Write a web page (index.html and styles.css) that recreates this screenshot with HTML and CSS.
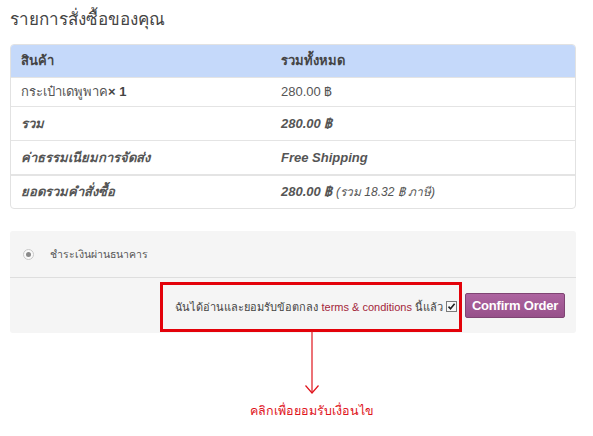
FILE: index.html
```html
<!DOCTYPE html>
<html lang="th">
<head>
<meta charset="utf-8">
<link rel="stylesheet" href="styles.css">
</head>
<body>
<div class="page">
  <h3 class="title">รายการสั่งซื้อของคุณ</h3>
  <table class="order">
    <thead>
      <tr><th class="c1">สินค้า</th><th>รวมทั้งหมด</th></tr>
    </thead>
    <tbody>
      <tr><td>กระเป๋าเดพูพาค<b class="qty">× 1</b></td><td>280.00 ฿</td></tr>
      <tr class="it"><td>รวม</td><td><b>280.00 ฿</b></td></tr>
      <tr class="it"><td>ค่าธรรมเนียมการจัดส่ง</td><td>Free Shipping</td></tr>
      <tr class="it total"><td>ยอดรวมคำสั่งซื้อ</td><td><b>280.00 ฿</b> <span class="tax">(รวม 18.32 ฿ ภาษี)</span></td></tr>
    </tbody>
  </table>

  <div class="payment">
    <div class="method">
      <span class="radio"><span class="dot"></span></span>
      <span class="method-label">ชำระเงินผ่านธนาคาร</span>
    </div>
    <div class="place">
      <div class="terms-box">
        <span class="terms">ฉันได้อ่านและยอมรับข้อตกลง <span class="link">terms &amp; conditions</span> นี้แล้ว</span>
        <span class="check">
          <svg width="11" height="11" viewBox="0 0 11 11"><rect x="0.5" y="0.5" width="10" height="10" fill="#f8f8f8" stroke="#7a7a7a"/><path d="M2.5 5.6 L4.5 7.8 L8.6 2.8" fill="none" stroke="#222" stroke-width="1.6"/></svg>
        </span>
      </div>
      <button class="confirm">Confirm Order</button>
    </div>
  </div>

  <div class="note">
    <svg class="arrow" width="16" height="64" viewBox="0 0 16 64"><path d="M8 0 V62" stroke="#e0141c" stroke-width="1.2" fill="none"/><path d="M1.5 54.5 L8 62 L14.5 54.5" stroke="#e0141c" stroke-width="1.2" fill="none"/></svg>
    <div class="caption">คลิกเพื่อยอมรับเงื่อนไข</div>
  </div>
</div>
</body>
</html>
```

FILE: styles.css
```css
html, body {
  margin: 0;
  padding: 0;
  background: #fff;
}
body {
  font-family: "Liberation Sans", Arial, sans-serif;
  font-size: 13px;
  color: #555;
}
.page {
  width: 566px;
  margin-left: 10px;
  padding-top: 8px;
}
.title {
  margin: 0 0 12px 0;
  font-size: 17px;
  font-weight: normal;
  color: #444;
  line-height: 24px;
}
.order {
  width: 100%;
  border-collapse: separate;
  border-spacing: 0;
  border: 1px solid #e2e2e2;
  border-radius: 4px;
  overflow: hidden;
  line-height: 16px;
}
.order th {
  background: #c5d9fa;
  text-align: left;
  font-weight: bold;
  color: #444;
  height: 32px;
  padding: 0 10px;
}
.order th.c1, .order td:first-child {
  width: 240px;
}
.order td {
  height: 28px;
  padding: 0 10px;
  border-top: 1px solid #e4e4e4;
  color: #555;
}
.order tr.it td {
  height: 33px;
  font-style: italic;
  font-weight: bold;
}
.order tr.total td {
  border-top: 2px solid #e4e4e4;
  height: 32px;
}
.qty {
  color: #444;
}
.tax {
  font-weight: normal;
  font-size: 12px;
}
.payment {
  margin-top: 22px;
  background: #f5f5f5;
  border-radius: 3px;
  height: 102px;
  display: flex;
  flex-direction: column;
}
.method {
  height: 46px;
  flex: none;
  display: flex;
  align-items: center;
  border-bottom: 1px solid #dedede;
  padding-left: 13px;
}
.radio {
  width: 9px;
  height: 9px;
  border-radius: 50%;
  border: 1px solid #c8c8c8;
  background: #fafafa;
  display: flex;
  align-items: center;
  justify-content: center;
}
.dot {
  width: 5px;
  height: 5px;
  border-radius: 50%;
  background: #8a8a8a;
}
.method-label {
  margin-left: 16px;
  color: #555;
  font-size: 10.5px;
}
.place {
  flex: 1;
  display: flex;
  align-items: center;
  justify-content: flex-end;
  padding-right: 11px;
}
.terms-box {
  border: 3px solid #e3020a;
  height: 44px;
  width: 294px;
  display: flex;
  align-items: center;
  justify-content: flex-end;
  padding-right: 2px;
  margin-right: 3px;
  margin-top: 2px;
}
.terms {
  color: #444;
  font-size: 11px;
  white-space: nowrap;
}
.link {
  color: #a3263a;
}
.check {
  display: inline-flex;
  margin-left: 3px;
}
.note {
  width: 200px;
  margin-left: 202px;
  margin-top: -2px;
  display: flex;
  flex-direction: column;
  align-items: center;
}
.arrow {
  display: block;
}
.caption {
  margin-top: 6px;
  color: #e0141c;
  font-size: 12.5px;
  white-space: nowrap;
}
.confirm {
  font-family: "Liberation Sans", Arial, sans-serif;
  font-weight: bold;
  font-size: 13px;
  color: #fff;
  background: linear-gradient(#ad64a0, #97508a);
  border: 1px solid #7f4473;
  border-radius: 2px;
  width: 100px;
  height: 25px;
  padding: 0;
  letter-spacing: -0.2px;
}
```
